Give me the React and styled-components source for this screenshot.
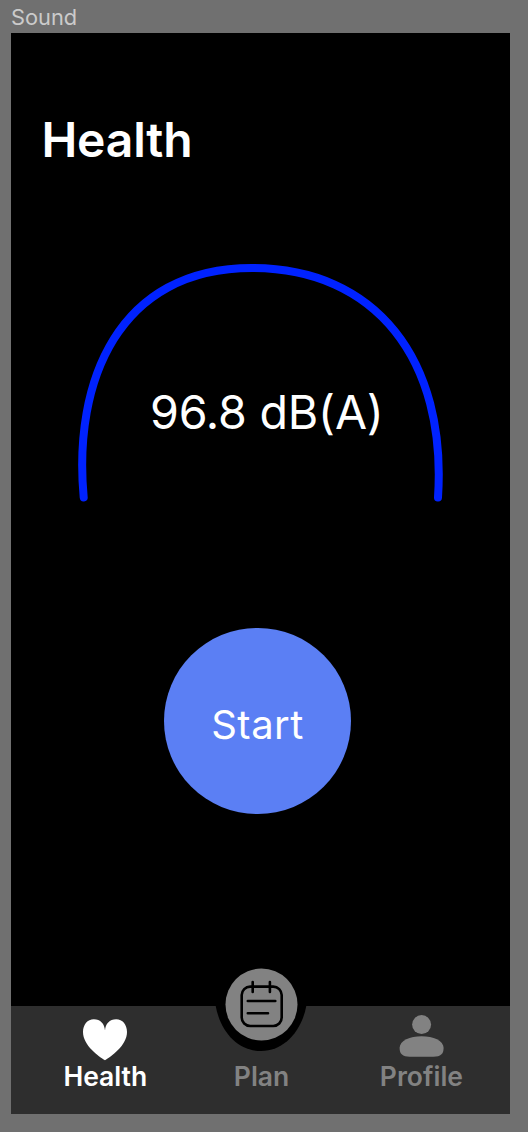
import React from "react";
import styled, { createGlobalStyle } from "styled-components";

const GlobalStyle = createGlobalStyle`
  * { box-sizing: border-box; }
  body { margin: 0; background: #707070; font-family: Inter, sans-serif; }
`;

const Canvas = styled.div`
  width: 528px;
  height: 1132px;
  overflow: hidden;
  background: #707070;
  padding: 3.4px 18px 18.4px 11.4px;
`;

const FrameLabel = styled.div`
  height: 30px;
  line-height: 28px;
  font-size: 21.8px;
  margin-left: -0.4px;
  color: #cbcbcb;
`;

const Screen = styled.main`
  display: flex;
  flex-direction: column;
  height: 1080.2px;
  background: #000;
  color: #fff;
`;

const Title = styled.h1`
  margin: 77.6px 0 0 30px;
  height: 58px;
  line-height: 58px;
  font-size: 48px;
  font-weight: 600;
  letter-spacing: -0.15px;
  white-space: nowrap;
`;

const Gauge = styled.section`
  display: grid;
  width: 370px;
  height: 244px;
  margin: 90px 0 0 64.6px;
  > * { grid-area: 1 / 1; }
`;

const Reading = styled.div`
  margin: 124px 0 0 74px;
  height: 58px;
  line-height: 58px;
  font-size: 46.6px;
  font-weight: 400;
  letter-spacing: -0.2px;
  white-space: nowrap;
`;

const StartButton = styled.button`
  width: 186.5px;
  height: 186.2px;
  margin: 124.9px 0 0 152.9px;
  padding: 9px 0 0;
  border: 0;
  border-radius: 50%;
  background: #5b7ff4;
  color: #fff;
  font: 400 40px/48px Inter, sans-serif;
  letter-spacing: 0.5px;
`;

const TabBar = styled.nav`
  position: relative;
  display: flex;
  justify-content: space-between;
  height: 107.5px;
  margin-top: auto;
  padding: 0 47px 0 52px;
  background: #2e2e2e;
`;

const Tab = styled.a`
  display: flex;
  flex-direction: column;
  align-items: center;
  justify-content: flex-end;
  padding-bottom: 21.6px;
  color: ${(p) => (p.$active ? "#fff" : "#828282")};
  font-size: 26.5px;
  line-height: 32px;
  font-weight: 600;
`;

const PlanTab = styled(Tab)`
  margin-left: -4px;
`;

const TabIcon = styled.svg`
  width: 46px;
  height: 44px;
  margin-bottom: -2px;
  overflow: visible;
  fill: currentColor;
`;

const PlanBadge = styled.svg`
  position: absolute;
  left: 198.6px;
  top: -46px;
  width: 104px;
  height: 96px;
`;

export default function App() {
  return (
    <Canvas>
      <GlobalStyle />
      <FrameLabel>Sound</FrameLabel>
      <Screen>
        <Title>Health</Title>
        <Gauge>
          <svg width="370" height="244" viewBox="76 259 370 244" fill="none">
            <path
              d="M83.7 497.5C73 382 118 268 252 268C376 268 447 360 438 497.5"
              stroke="#0022ff"
              strokeWidth="8"
              strokeLinecap="round"
            />
          </svg>
          <Reading>96.8 dB(A)</Reading>
        </Gauge>
        <StartButton>Start</StartButton>
        <TabBar>
          <Tab $active>
            <TabIcon viewBox="0 0 46 44">
              <path d="M23 42.3C17 38.5 1 27.5 1 14C1 6.5 5.5 1.2 11.8 1.2C18.5 1.2 22.6 6 23 12.5C23.4 6 27.5 1.2 34.2 1.2C40.5 1.2 45 6.5 45 14C45 27.5 29 38.5 23 42.3Z" />
            </TabIcon>
            Health
          </Tab>
          <PlanTab>Plan</PlanTab>
          <Tab>
            <TabIcon viewBox="0 0 46 44">
              <circle cx="23.6" cy="6.6" r="9.5" />
              <path d="M1.6 30C1.6 22.5 12 18.2 23.6 18.2C35.2 18.2 45.6 22.5 45.6 30C45.6 36 42.5 38.7 35.6 38.7H11.6C4.7 38.7 1.6 36 1.6 30Z" />
            </TabIcon>
            Profile
          </Tab>
          <PlanBadge viewBox="210 960 104 96">
            <path
              d="M215.5 1005H306.5C302 1031 284 1051 261.2 1051C237 1051 220 1031 215.5 1005Z"
              fill="#000"
            />
            <circle cx="261.5" cy="1004.5" r="36" fill="#828282" />
            <g fill="none" stroke="#000" strokeWidth="2.6" strokeLinecap="round">
              <rect x="241.7" y="986.6" width="40" height="39.4" rx="8.5" />
              <path d="M252.7 982V992M269.9 982V992M247.8 1001H275.3M247.8 1013.3H268" />
            </g>
          </PlanBadge>
        </TabBar>
      </Screen>
    </Canvas>
  );
}
